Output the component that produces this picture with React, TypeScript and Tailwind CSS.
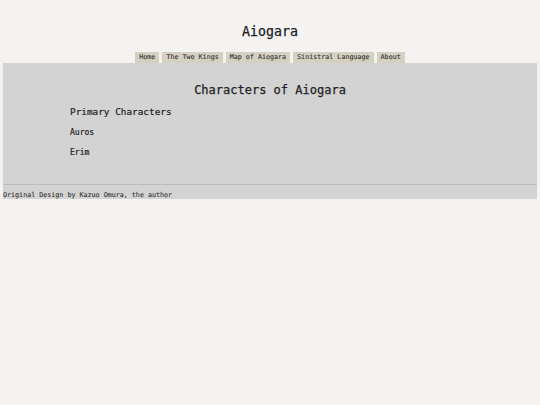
import React from 'react';

const links = ['Home', 'The Two Kings', 'Map of Aiogara', 'Sinistral Language', 'About'];

const App: React.FC = () => {
    return (
        <div className="min-h-screen bg-[#f4f3f1] text-[#222] font-['DejaVu_Sans_Mono',monospace]">
            <header className="pt-[23px]">
                <h1 className="text-center text-[13.3px] leading-[18px] h-[18px] [-webkit-text-stroke:0.25px_#222]">Aiogara</h1>
                <nav className="mt-[11px] flex justify-center gap-[3px]">
                    {links.map(l => (
                        <a key={l} className="bg-[#d4d0c2] px-[4px] h-[11px] text-[6.7px] leading-[11px] text-[#333] [-webkit-text-stroke:0.1px_#333]">
                            {l}
                        </a>
                    ))}
                </nav>
            </header>
            <div className="mx-[3px] bg-[#d3d3d3]">
                <main className="h-[121px] pt-[19px]">
                    <h2 className="text-center text-[12px] leading-[16px] [-webkit-text-stroke:0.25px_#222]">Characters of Aiogara</h2>
                    <div className="pl-[67px]">
                        <h3 className="mt-[8px] text-[9.4px] leading-[12px] [-webkit-text-stroke:0.2px_#222]">Primary Characters</h3>
                        <p className="mt-[10px] text-[8px] leading-[10px] [-webkit-text-stroke:0.2px_#222]">Auros</p>
                        <p className="mt-[10px] text-[8px] leading-[10px] [-webkit-text-stroke:0.2px_#222]">Erim</p>
                    </div>
                </main>
                <div className="border-t border-[#bcbcbc]" />
                <footer className="h-[14px] pt-[6px] text-[6.7px] leading-[8px] text-[#333] [-webkit-text-stroke:0.1px_#333]">
                    Original Design by Kazuo Omura, the author
                </footer>
            </div>
        </div>
    );
};

export default App;
